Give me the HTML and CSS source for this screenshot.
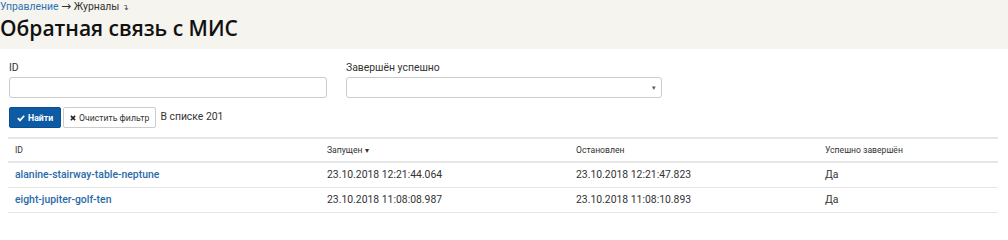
FILE: index.html
```html
<!DOCTYPE html>
<html lang="ru">
<head>
<meta charset="utf-8">
<title>Обратная связь с МИС</title>
<link rel="stylesheet" href="styles.css">
</head>
<body>
<header class="page-head">
  <div class="crumbs"><a href="#" class="crumb-link">Управление</a> <span class="arrow">→</span> Журналы <span class="crumb-more">↴</span></div>
  <h1 class="title">Обратная связь с МИС</h1>
</header>
<main class="content">
  <form class="filters">
    <div class="field">
      <label class="label">ID</label>
      <input class="input" type="text">
    </div>
    <div class="field">
      <label class="label">Завершён успешно</label>
      <div class="select"><span class="caret">▾</span></div>
    </div>
  </form>
  <div class="actions">
    <button class="btn btn-primary" type="button"><svg class="ico" viewBox="0 0 10 10" width="8" height="8"><path d="M1 5.2 L3.8 8 L9 2.2" fill="none" stroke="#fff" stroke-width="2.2"/></svg>Найти</button>
    <button class="btn btn-default" type="button"><svg class="ico" viewBox="0 0 10 10" width="6" height="6"><path d="M1.5 1.5 L8.5 8.5 M8.5 1.5 L1.5 8.5" fill="none" stroke="#222" stroke-width="2.6"/></svg>Очистить фильтр</button>
    <span class="count">В списке 201</span>
  </div>
  <table class="grid">
    <thead>
      <tr>
        <th class="c1">ID</th>
        <th class="c2">Запущен <span class="sort">▾</span></th>
        <th class="c3">Остановлен</th>
        <th class="c4">Успешно завершён</th>
      </tr>
    </thead>
    <tbody>
      <tr>
        <td><a href="#" class="row-link">alanine-stairway-table-neptune</a></td>
        <td>23.10.2018 12:21:44.064</td>
        <td>23.10.2018 12:21:47.823</td>
        <td>Да</td>
      </tr>
      <tr>
        <td><a href="#" class="row-link">eight-jupiter-golf-ten</a></td>
        <td>23.10.2018 11:08:08.987</td>
        <td>23.10.2018 11:08:10.893</td>
        <td>Да</td>
      </tr>
    </tbody>
  </table>
</main>
</body>
</html>
```
FILE: styles.css
```css
* { box-sizing: border-box; }
html, body { margin: 0; padding: 0; background: #fff; }
body {
  font-family: Roboto, "Liberation Sans", Arial, sans-serif;
  font-size: 10.4px;
  color: #333;
}
.page-head { background: #f5f4ee; height: 49px; }
.crumbs { font-size: 10.4px; line-height: 13px; color: #333; }
.crumb-link { color: #2f73b5; text-decoration: none; }
.arrow { font-family: "DejaVu Sans", sans-serif; font-size: 12px; line-height: 10px; }
.crumb-more { font-size: 8px; }
.title {
  margin: 0;
  font-family: "Open Sans", "Noto Sans", sans-serif;
  font-weight: 600;
  font-size: 21px;
  line-height: 28px;
  color: #111;
}
.content { padding: 10px 10px 0 8px; }
.filters { display: grid; grid-template-columns: 318px 316px; column-gap: 19px; padding-left: 1px; }
.field { display: flex; flex-direction: column; }
.label { line-height: 17px; margin-bottom: 1px; font-size: 10.4px; color: #333; }
.input, .select { height: 21px; border: 1px solid #ccc; border-radius: 3px; background: #fff; margin: 0; padding: 0 5px; font: inherit; }
.select { display: flex; align-items: center; justify-content: flex-end; }
.caret { font-size: 7px; color: #555; }
.actions { display: flex; align-items: flex-start; gap: 2px; margin-top: 9px; padding-left: 1px; }
.btn { height: 21px; display: inline-flex; align-items: center; gap: 3px; border-radius: 2px; font-family: Roboto, sans-serif; font-size: 8.7px; white-space: nowrap; margin: 0; }
.btn-primary { background: #0e5ba5; border: 1px solid #0b4f90; color: #fff; font-weight: 700; padding: 0 7px; }
.btn-default { background: #fff; border: 1px solid #ccc; color: #333; padding: 0 6px; }
.count { font-size: 10.4px; line-height: 21px; margin-left: 2px; position: relative; top: -1px; }
.grid { margin-top: 9px; width: 990px; border-collapse: collapse; table-layout: fixed; }
.grid th, .grid td { text-align: left; padding: 0 7px; }
.grid th { font-size: 8.6px; font-weight: 400; height: 24px; border-top: 2px solid #e6e6e6; border-bottom: 2px solid #e6e6e6; }
.grid td { font-size: 10.4px; height: 25px; border-bottom: 1px solid #e6e6e6; }
.c1 { width: 312px; } .c2 { width: 249px; } .c3 { width: 249px; } .c4 { width: 180px; }
.sort { font-size: 8px; }
.row-link { color: #2a6aa8; font-weight: 500; text-decoration: none; }
```
